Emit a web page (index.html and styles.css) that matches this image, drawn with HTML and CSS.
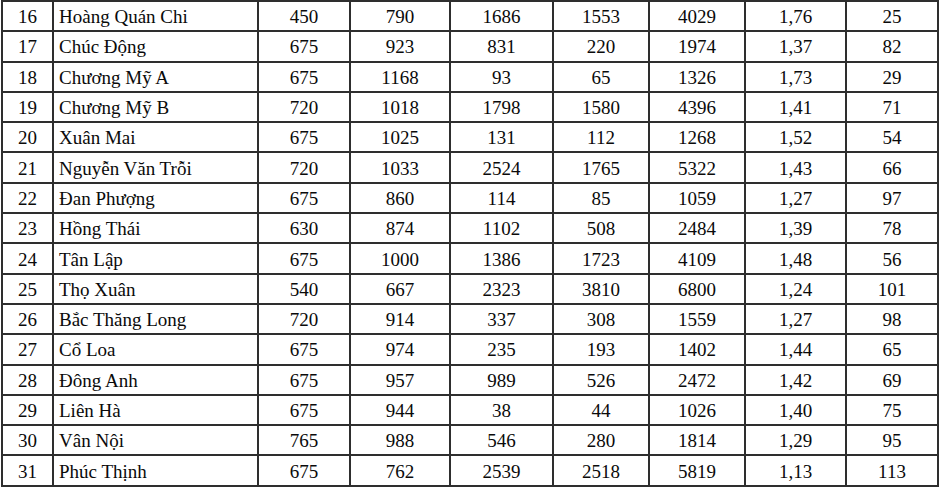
FILE: index.html
```html
<!DOCTYPE html>
<html lang="vi">
<head>
<meta charset="utf-8">
<title>Bảng</title>
<link rel="stylesheet" href="styles.css">
</head>
<body>
<table class="data">
<colgroup>
<col class="c1"><col class="c2"><col class="c3"><col class="c4"><col class="c5"><col class="c6"><col class="c7"><col class="c8"><col class="c9">
</colgroup>
<tbody>
<tr><td>16</td><td class="name">Hoàng Quán Chi</td><td>450</td><td>790</td><td>1686</td><td>1553</td><td>4029</td><td>1,76</td><td>25</td></tr>
<tr><td>17</td><td class="name">Chúc Động</td><td>675</td><td>923</td><td>831</td><td>220</td><td>1974</td><td>1,37</td><td>82</td></tr>
<tr><td>18</td><td class="name">Chương Mỹ A</td><td>675</td><td>1168</td><td>93</td><td>65</td><td>1326</td><td>1,73</td><td>29</td></tr>
<tr><td>19</td><td class="name">Chương Mỹ B</td><td>720</td><td>1018</td><td>1798</td><td>1580</td><td>4396</td><td>1,41</td><td>71</td></tr>
<tr><td>20</td><td class="name">Xuân Mai</td><td>675</td><td>1025</td><td>131</td><td>112</td><td>1268</td><td>1,52</td><td>54</td></tr>
<tr><td>21</td><td class="name">Nguyễn Văn Trỗi</td><td>720</td><td>1033</td><td>2524</td><td>1765</td><td>5322</td><td>1,43</td><td>66</td></tr>
<tr><td>22</td><td class="name">Đan Phượng</td><td>675</td><td>860</td><td>114</td><td>85</td><td>1059</td><td>1,27</td><td>97</td></tr>
<tr><td>23</td><td class="name">Hồng Thái</td><td>630</td><td>874</td><td>1102</td><td>508</td><td>2484</td><td>1,39</td><td>78</td></tr>
<tr><td>24</td><td class="name">Tân Lập</td><td>675</td><td>1000</td><td>1386</td><td>1723</td><td>4109</td><td>1,48</td><td>56</td></tr>
<tr><td>25</td><td class="name">Thọ Xuân</td><td>540</td><td>667</td><td>2323</td><td>3810</td><td>6800</td><td>1,24</td><td>101</td></tr>
<tr><td>26</td><td class="name">Bắc Thăng Long</td><td>720</td><td>914</td><td>337</td><td>308</td><td>1559</td><td>1,27</td><td>98</td></tr>
<tr><td>27</td><td class="name">Cổ Loa</td><td>675</td><td>974</td><td>235</td><td>193</td><td>1402</td><td>1,44</td><td>65</td></tr>
<tr><td>28</td><td class="name">Đông Anh</td><td>675</td><td>957</td><td>989</td><td>526</td><td>2472</td><td>1,42</td><td>69</td></tr>
<tr><td>29</td><td class="name">Liên Hà</td><td>675</td><td>944</td><td>38</td><td>44</td><td>1026</td><td>1,40</td><td>75</td></tr>
<tr><td>30</td><td class="name">Vân Nội</td><td>765</td><td>988</td><td>546</td><td>280</td><td>1814</td><td>1,29</td><td>95</td></tr>
<tr><td>31</td><td class="name">Phúc Thịnh</td><td>675</td><td>762</td><td>2539</td><td>2518</td><td>5819</td><td>1,13</td><td>113</td></tr>
</tbody>
</table>
</body>
</html>
```

FILE: styles.css
```css
html, body {
  margin: 0;
  padding: 0;
  background: #ffffff;
}
body {
  font-family: "Liberation Serif", "Times New Roman", serif;
  font-size: 19px;
  color: #0a0a0a;
}
.data {
  border-collapse: collapse;
  table-layout: fixed;
  width: 936px;
  margin: 0 0 0 1px;
}
.c1 { width: 51px; }
.c2 { width: 205px; }
.c3 { width: 92px; }
.c4 { width: 100px; }
.c5 { width: 103px; }
.c6 { width: 96px; }
.c7 { width: 96px; }
.c8 { width: 101px; }
.c9 { width: 92px; }
.data td {
  border: 2px solid #2e2e2e;
  height: 30.3px;
  padding: 2px 0 0 0;
  text-align: center;
  vertical-align: middle;
  line-height: 22px;
  box-sizing: border-box;
}
.data td.name {
  text-align: left;
  padding-left: 5px;
}
```
